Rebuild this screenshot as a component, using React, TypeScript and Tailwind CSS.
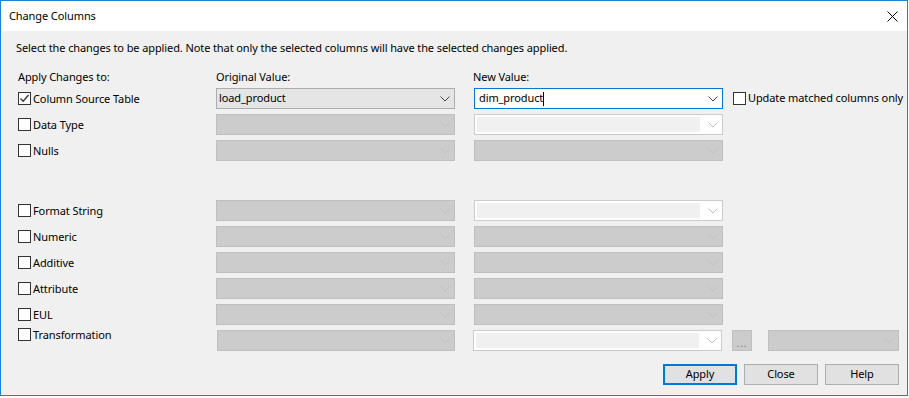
import { ReactNode } from "react";

const font = { fontFamily: '"Noto Sans", "Open Sans", sans-serif', letterSpacing: "-0.1px" };

function Chevron({ color }: { color: string }) {
  return (
    <svg width="10" height="6" viewBox="0 0 10 6" className="shrink-0">
      <path d="M0.5 0.5 L5 5 L9.5 0.5" fill="none" stroke={color} strokeWidth="1" />
    </svg>
  );
}

function CheckBox({ checked }: { checked?: boolean }) {
  return (
    <div className="w-[13px] h-[13px] border border-[#333333] bg-white shrink-0 flex items-center justify-center">
      {checked && (
        <svg width="11" height="11" viewBox="0 0 11 11">
          <path d="M1.5 5.5 L4.2 8.2 L9.5 2" fill="none" stroke="#333333" strokeWidth="1.3" />
        </svg>
      )}
    </div>
  );
}

// kind: active | focus | dim | dimEdit
function Combo({ kind, text, w }: { kind: string; text?: string; w: string }) {
  if (kind === "active") {
    return (
      <div className={`${w} shrink-0 h-[21px] border border-[#adadad] bg-[#e5e5e5] flex items-center pl-[2px] pr-[4px]`}>
        <span className="flex-1 text-[11px] text-black">{text}</span>
        <Chevron color="#444444" />
      </div>
    );
  }
  if (kind === "focus") {
    return (
      <div className={`${w} shrink-0 h-[21px] border border-[#0078d7] bg-white flex items-center pl-[4px] pr-[4px]`}>
        <span className="flex-1 text-[11px] text-black flex items-center">
          {text}
          <span className="inline-block w-px h-[14px] bg-black" />
        </span>
        <Chevron color="#444444" />
      </div>
    );
  }
  if (kind === "dimEdit") {
    return (
      <div className={`${w} shrink-0 h-[21px] border border-[#cccccc] bg-white flex items-center p-[2px] pr-[4px]`}>
        <div className="flex-1 h-full bg-[#f0f0f0] mr-[8px]" />
        <Chevron color="#bfbfbf" />
      </div>
    );
  }
  return (
    <div className={`${w} shrink-0 h-[21px] border border-[#bfbfbf] bg-[#cccccc] flex items-center justify-end pr-[4px]`}>
      <Chevron color="#bfbfbf" />
    </div>
  );
}

function Row({ label, checked, orig, next, children }: { label: string; checked?: boolean; orig: ReactNode; next: ReactNode; children?: ReactNode }) {
  return (
    <div className="flex items-center h-[21px]">
      <div className="w-[198px] shrink-0 flex items-center gap-[2px] ml-[2px]">
        <CheckBox checked={checked} />
        <span className="text-[11px] text-black leading-none">{label}</span>
      </div>
      {orig}
      <div className="w-[19px] shrink-0" />
      {next}
      {children}
    </div>
  );
}

function Btn({ label, primary }: { label: string; primary?: boolean }) {
  return (
    <button
      className={`w-[74px] h-[21px] bg-[#e1e1e1] text-[11px] text-black flex items-center justify-center ${
        primary ? "border-2 border-[#0078d7]" : "border border-[#adadad]"
      }`}
    >
      {label}
    </button>
  );
}

export default function App() {
  return (
    <div className="w-[909px] h-[398px] bg-white" style={font}>
      <div className="w-[908px] h-[396px] border border-[#1883d7] flex flex-col">
        <div className="h-[30px] bg-white flex items-center justify-between pl-[8px] pr-[8px]">
          <span className="text-[11px] text-black">Change Columns</span>
          <svg width="11" height="11" viewBox="0 0 11 11" className="mr-[1px]">
            <path d="M0.5 0.5 L10.5 10.5 M10.5 0.5 L0.5 10.5" stroke="#000" strokeWidth="1" />
          </svg>
        </div>
        <div className="flex-1 bg-[#f0f0f0] pl-[15px] pr-[8px] flex flex-col">
          <div className="mt-[9px] text-[11px] leading-[16px] text-black">
            Select the changes to be applied. Note that only the selected columns will have the selected changes applied.
          </div>
          <div className="mt-[13px] flex text-[11px] leading-[16px] text-black">
            <span className="w-[198px] ml-[2px]">Apply Changes to:</span>
            <span className="w-[257px]">Original Value:</span>
            <span>New Value:</span>
          </div>
          <div className="mt-[3px] flex flex-col gap-[5px]">
            <Row
              label="Column Source Table"
              checked
              orig={<Combo kind="active" text="load_product" w="w-[239px]" />}
              next={<Combo kind="focus" text="dim_product" w="w-[249px]" />}
            >
              <div className="ml-[10px] flex items-center gap-[2px] whitespace-nowrap">
                <CheckBox />
                <span className="text-[11px] text-black">Update matched columns only</span>
              </div>
            </Row>
            <Row label="Data Type" orig={<Combo kind="dim" w="w-[239px]" />} next={<Combo kind="dimEdit" w="w-[249px]" />} />
            <Row label="Nulls" orig={<Combo kind="dim" w="w-[239px]" />} next={<Combo kind="dim" w="w-[249px]" />} />
            <div className="h-[29px]" />
            <Row label="Format String" orig={<Combo kind="dim" w="w-[239px]" />} next={<Combo kind="dimEdit" w="w-[249px]" />} />
            <Row label="Numeric" orig={<Combo kind="dim" w="w-[239px]" />} next={<Combo kind="dim" w="w-[249px]" />} />
            <Row label="Additive" orig={<Combo kind="dim" w="w-[239px]" />} next={<Combo kind="dim" w="w-[249px]" />} />
            <Row label="Attribute" orig={<Combo kind="dim" w="w-[239px]" />} next={<Combo kind="dim" w="w-[249px]" />} />
            <Row label="EUL" orig={<Combo kind="dim" w="w-[239px]" />} next={<Combo kind="dim" w="w-[249px]" />} />
            <div className="flex h-[21px]">
              <div className="w-[199px] shrink-0 flex items-start gap-[2px] ml-[2px] -mt-[2px]">
                <CheckBox />
                <span className="text-[11px] text-black leading-[13px]">Transformation</span>
              </div>
              <Combo kind="dim" w="w-[238px]" />
              <div className="w-[18px] shrink-0" />
              <Combo kind="dimEdit" w="w-[249px]" />
              <div className="ml-[10px] shrink-0 w-[20px] h-[21px] bg-[#cccccc] border border-[#bfbfbf] flex items-end justify-center pb-[2px]">
                <span className="text-[10px] leading-none text-[#8c7a99] tracking-[1px]">...</span>
              </div>
              <div className="w-[16px] shrink-0" />
              <Combo kind="dim" w="w-[131px]" />
            </div>
          </div>
          <div className="mt-[13px] flex justify-end gap-[7px]">
            <Btn label="Apply" primary />
            <Btn label="Close" />
            <Btn label="Help" />
          </div>
        </div>
      </div>
    </div>
  );
}
